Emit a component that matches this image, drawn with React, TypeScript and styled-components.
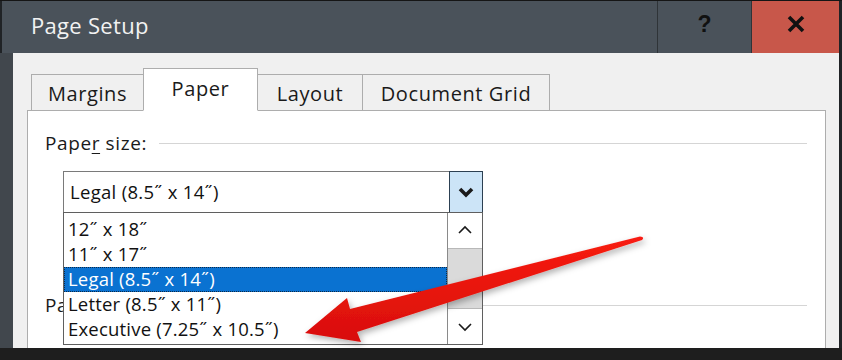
import styled, { createGlobalStyle } from "styled-components";

const GlobalStyle = createGlobalStyle`
  html, body {
    margin: 0;
    padding: 0;
    background: #1b1b1b;
  }
  * {
    box-sizing: border-box;
  }
`;

const uiFont = `"Open Sans", "Noto Sans", "Liberation Sans", sans-serif`;

const Frame = styled.div`
  position: relative;
  width: 842px;
  height: 360px;
  display: flex;
  flex-direction: column;
  overflow: hidden;
  background: #1b1b1b;
  border-top: 1px solid #151515;
  font-family: ${uiFont};
`;

const TitleBar = styled.div`
  height: 52px;
  flex: none;
  display: flex;
  align-items: stretch;
  background: #4a525a;
  border-left: 2px solid #202326;
`;

const Title = styled.div`
  flex: 1;
  display: flex;
  align-items: center;
  padding-left: 29px;
  padding-bottom: 4px;
  color: #f2f2f2;
  font-size: 22px;
  letter-spacing: 0.3px;
`;

const CaptionButton = styled.div<{ $bg: string; $w: number }>`
  width: ${(p) => p.$w}px;
  display: flex;
  align-items: center;
  justify-content: center;
  padding-bottom: 6px;
  background: ${(p) => p.$bg};
  border-left: 1px solid #2f3438;
  color: #111;
  font-weight: 700;
  font-size: 23px;
  font-family: "Liberation Sans", Arial, sans-serif;
`;

const EdgeRight = styled.div`
  width: 3px;
  background: #202326;
`;

const Middle = styled.div`
  flex: 1;
  display: flex;
  min-height: 0;
`;

const SideStrip = styled.div<{ $w: number; $bg: string }>`
  width: ${(p) => p.$w}px;
  flex: none;
  background: ${(p) => p.$bg};
`;

const Body = styled.div`
  flex: 1;
  display: flex;
  flex-direction: column;
  background: #f0f0f0;
  padding: 15px 9px 0 14px;
  min-width: 0;
`;

const BottomEdge = styled.div`
  height: 12px;
  flex: none;
  background: #1e1e1e;
`;

const TabRow = styled.div`
  display: flex;
  align-items: flex-end;
  padding-left: 4px;
  height: 43px;
  position: relative;
  z-index: 1;
  margin-bottom: -1px;
`;

const Tab = styled.div<{ $w: number; $active?: boolean }>`
  width: ${(p) => p.$w}px;
  height: ${(p) => (p.$active ? 43 : 37)}px;
  display: flex;
  align-items: center;
  justify-content: center;
  padding-top: ${(p) => (p.$active ? 0 : 2)}px;
  padding-bottom: ${(p) => (p.$active ? 3 : 0)}px;
  font-size: 20px;
  letter-spacing: 0.6px;
  color: #1a1a1a;
  background: ${(p) => (p.$active ? "#ffffff" : "#f0f0f0")};
  border: 1px solid #adadad;
  border-bottom: ${(p) => (p.$active ? "1px solid #ffffff" : "1px solid #adadad")};
  margin-right: -1px;
  position: relative;
  z-index: ${(p) => (p.$active ? 2 : 1)};
`;

const Panel = styled.div`
  flex: 1;
  position: relative;
  background: #ffffff;
  border: 1px solid #adadad;
  border-bottom: none;
  padding: 20px 18px 0 17px;
`;

const GroupHeader = styled.div`
  display: flex;
  align-items: center;
  gap: 12px;
  height: 24px;
  font-size: 19px;
  letter-spacing: 0.6px;
  color: #1a1a1a;
`;

const Rule = styled.div`
  flex: 1;
  height: 1px;
  background: #d5d5d5;
`;

const Accel = styled.span`
  text-decoration: underline;
  text-underline-offset: 3px;
`;

const ComboWrap = styled.div`
  position: relative;
  margin: 16px 0 0 18px;
  width: 420px;
`;

const Combo = styled.div`
  height: 42px;
  display: flex;
  border: 1px solid #7a7a7a;
  background: #ffffff;
`;

const ComboText = styled.div`
  flex: 1;
  display: flex;
  align-items: center;
  padding-left: 6px;
  padding-bottom: 2px;
  font-size: 18.5px;
  letter-spacing: 0.3px;
  color: #111;
`;

const ComboButton = styled.div`
  width: 34px;
  margin: -1px -1px -1px 0;
  display: flex;
  align-items: center;
  justify-content: center;
  background: #cce4f7;
  border: 1px solid #2c4052;
`;

const DropList = styled.div`
  position: absolute;
  top: 41px;
  left: 0;
  width: 420px;
  height: 133px;
  display: flex;
  background: #ffffff;
  border: 1px solid #5f5f5f;
  z-index: 3;
`;

const Items = styled.div`
  flex: 1;
  padding-top: 4px;
`;

const Item = styled.div<{ $selected?: boolean }>`
  height: 25px;
  display: flex;
  align-items: center;
  padding-left: 4px;
  padding-bottom: 2px;
  font-size: 18.5px;
  letter-spacing: 0.2px;
  color: ${(p) => (p.$selected ? "#ffffff" : "#111")};
  background: ${(p) => (p.$selected ? "#0a72d1" : "transparent")};
  outline: ${(p) => (p.$selected ? "1px dotted #0c2a48" : "none")};
  outline-offset: -1px;
`;

const ScrollBar = styled.div`
  width: 35px;
  display: flex;
  flex-direction: column;
  border-left: 1px solid #8a8a8a;
  background: #ffffff;
`;

const ScrollArrow = styled.div`
  height: 35px;
  display: flex;
  align-items: center;
  justify-content: center;
`;

const Thumb = styled.div`
  height: 62px;
  background: #dadada;
  border-top: 1px solid #b8b8b8;
  border-bottom: 1px solid #b8b8b8;
`;

const Track = styled.div`
  flex: 1;
`;

const SecondGroup = styled.div`
  margin-top: 80px;
`;

const ArrowLayer = styled.svg`
  position: absolute;
  left: 0;
  top: 0;
  width: 842px;
  height: 360px;
  pointer-events: none;
  z-index: 10;
  overflow: visible;
`;

const inch = "\u02dd";

function Chevron({ dir, bold }: { dir: "up" | "down"; bold?: boolean }) {
  const d = dir === "down" ? "M3 4 L9 10 L15 4" : "M3 10 L9 4 L15 10";
  return (
    <svg width="18" height="14" viewBox="0 0 18 14">
      <path
        d={d}
        fill="none"
        stroke="#1a1a1a"
        strokeWidth={bold ? 3.6 : 1.6}
        strokeLinejoin="miter"
      />
    </svg>
  );
}

const sizes = [
  `12${inch} x 18${inch}`,
  `11${inch} x 17${inch}`,
  `Legal (8.5${inch} x 14${inch})`,
  `Letter (8.5${inch} x 11${inch})`,
  `Executive (7.25${inch} x 10.5${inch})`,
];

export default function App() {
  return (
    <>
      <GlobalStyle />
      <Frame>
        <TitleBar>
          <Title>Page Setup</Title>
          <CaptionButton $bg="#4a525a" $w={94}>?</CaptionButton>
          <CaptionButton $bg="#c8574a" $w={88}>
            <svg width="18" height="18" viewBox="0 0 18 18">
              <path d="M2 2 L16 16 M16 2 L2 16" stroke="#111" strokeWidth="3.6" />
            </svg>
          </CaptionButton>
          <EdgeRight />
        </TitleBar>
        <Middle>
          <SideStrip $w={13} $bg="#41474d" />
          <Body>
            <TabRow>
              <Tab $w={113}>Margins</Tab>
              <Tab $w={115} $active>
                Paper
              </Tab>
              <Tab $w={106}>Layout</Tab>
              <Tab $w={188}>Document Grid</Tab>
            </TabRow>
            <Panel>
              <GroupHeader>
                <span>
                  Pape<Accel>r</Accel> size:
                </span>
                <Rule />
              </GroupHeader>
              <ComboWrap>
                <Combo>
                  <ComboText>Legal (8.5{inch} x 14{inch})</ComboText>
                  <ComboButton>
                    <Chevron dir="down" bold />
                  </ComboButton>
                </Combo>
                <DropList>
                  <Items>
                    {sizes.map((s, i) => (
                      <Item key={s} $selected={i === 2}>
                        {s}
                      </Item>
                    ))}
                  </Items>
                  <ScrollBar>
                    <ScrollArrow>
                      <Chevron dir="up" />
                    </ScrollArrow>
                    <Thumb />
                    <Track />
                    <ScrollArrow>
                      <Chevron dir="down" />
                    </ScrollArrow>
                  </ScrollBar>
                </DropList>
              </ComboWrap>
              <SecondGroup>
                <GroupHeader>
                  <span>Paper source</span>
                  <Rule />
                </GroupHeader>
              </SecondGroup>
            </Panel>
          </Body>
          <SideStrip $w={4} $bg="#f0f0f0" />
          <SideStrip $w={3} $bg="#202326" />
        </Middle>
        <BottomEdge />
        <ArrowLayer viewBox="0 0 842 360">
          <defs>
            <linearGradient id="arrowFill" x1="0" y1="0" x2="0" y2="1">
              <stop offset="0" stopColor="#f81c12" />
              <stop offset="1" stopColor="#d80e0a" />
            </linearGradient>
            <filter id="arrowShadow" x="-10%" y="-30%" width="120%" height="160%">
              <feDropShadow dx="2" dy="3" stdDeviation="3" floodColor="#000" floodOpacity="0.3" />
            </filter>
          </defs>
          <path
            d="M305 332 L347 297 L350 308 L640 235.5 Q645 235.8 642 239 L357 331 L361 341 Z"
            fill="url(#arrowFill)"
            filter="url(#arrowShadow)"
          />
        </ArrowLayer>
      </Frame>
    </>
  );
}
